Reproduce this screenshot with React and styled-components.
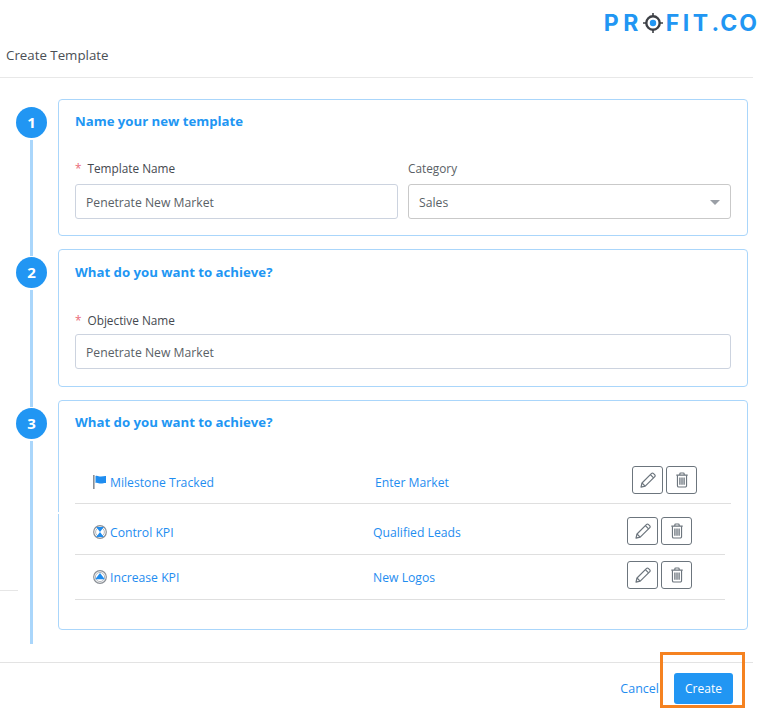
import React from "react";
import styled, { createGlobalStyle } from "styled-components";

const Global = createGlobalStyle`
  html, body { margin: 0; padding: 0; background: #fff; }
  body { font-family: "Open Sans", "Noto Sans", sans-serif; color: #4a4f55; }
  * { box-sizing: border-box; }
`;

const Page = styled.div`
  width: 768px;
  height: 708px;
  overflow: hidden;
  position: relative;
  display: flex;
  flex-direction: column;
`;
const LogoBar = styled.div`
  height: 45px;
  padding: 12px 9px 0 0;
  display: flex;
  justify-content: flex-end;
`;
const Logo = styled.div`
  display: flex;
  align-items: center;
  height: 21px;
  font-family: Inter, "Liberation Sans", sans-serif;
  font-weight: 700;
  font-size: 23px;
  color: #2196f3;
`;
const LogoWord = styled.span`
  letter-spacing: ${(p) => p.$spacing}px;
`;
const LogoMark = styled.svg`
  width: 20px;
  height: 20px;
  margin: 0 3px 0 0;
`;
const TitleBar = styled.div`
  height: 33px;
  padding: 1px 0 0 6px;
  border-bottom: 1px solid #e8e8e8;
  font-size: 13.3px;
  line-height: 18px;
  color: #4a4f55;
  margin-right: 15px;
`;
const Steps = styled.div`
  height: 584px;
  padding-top: 21px;
  display: flex;
  flex-direction: column;
  gap: 13px;
`;
const Step = styled.section`
  display: flex;
  height: ${(p) => p.$height}px;
`;
const Rail = styled.div`
  width: 58px;
  flex: none;
  padding: 8px 0 0 16px;
  display: flex;
  flex-direction: column;
  margin-bottom: ${(p) => p.$tail}px;
`;
const Bullet = styled.div`
  width: 31px;
  height: 31px;
  padding-bottom: 1px;
  border-radius: 50%;
  background: #2196f3;
  color: #fff;
  font-weight: 700;
  font-size: 15px;
  display: flex;
  align-items: center;
  justify-content: center;
  flex: none;
`;
const RailLine = styled.div`
  width: 3px;
  margin: 2px 0 0 14px;
  background: #aad6fb;
  flex: 1;
`;
const Card = styled.div`
  position: relative;
  width: 690px;
  border: 1px solid #aad6fb;
  border-radius: 4px;
  padding: ${(p) => p.$pt}px 16px 0;
  height: ${(p) => p.$height}px;
`;
const CardTitle = styled.h2`
  margin: 0;
  font-size: 13.2px;
  line-height: 18px;
  font-weight: 700;
  color: #2196f3;
`;
const FieldRow = styled.div`
  margin-top: ${(p) => p.$mt}px;
  display: grid;
  grid-template-columns: 323px 323px;
  gap: 10px;
`;
const Field = styled.div`
  display: flex;
  flex-direction: column;
  grid-column: ${(p) => (p.$wide ? "1 / -1" : "auto")};
`;
const Label = styled.label`
  font-size: 11.8px;
  line-height: 16px;
  font-weight: ${(p) => (p.$plain ? 400 : 500)};
  color: ${(p) => (p.$plain ? "#5a5f66" : "#45494f")};
  margin-bottom: ${(p) => p.$mb}px;
  display: flex;
  gap: 6px;
`;
const Star = styled.span`
  color: #ea6a78;
`;
const Input = styled.div`
  height: 35px;
  padding: 1px 10px 0;
  border: 1px solid ${(p) => (p.$select ? "#c9c9c9" : "#ccd3df")};
  border-radius: 3px;
  display: flex;
  align-items: center;
  justify-content: space-between;
  font-size: 12.2px;
  color: #5a5f66;
`;
const Caret = styled.span`
  width: 0;
  height: 0;
  border-left: 5px solid transparent;
  border-right: 5px solid transparent;
  border-top: 5px solid #9a9fa6;
`;
const Rows = styled.div`
  margin-top: 25px;
  display: flex;
  flex-direction: column;
`;
const Row = styled.div`
  display: flex;
  align-items: center;
  height: ${(p) => p.$h}px;
  width: ${(p) => p.$w}px;
  padding: ${(p) => p.$pad};
  border-bottom: 1px solid #dfdfdf;
  font-size: 12.2px;
  color: #1f8df0;
`;
const Kind = styled.div`
  width: ${(p) => p.$w}px;
  flex: none;
  display: flex;
  align-items: center;
  gap: 3px;
  padding-top: ${(p) => p.$shift}px;
`;
const Value = styled.div`
  flex: 1;
  padding-top: ${(p) => p.$shift}px;
`;
const Actions = styled.div`
  display: flex;
  gap: 3px;
  margin-right: ${(p) => p.$mr}px;
`;
const IconBtn = styled.button`
  width: 31px;
  height: 28px;
  padding: 0;
  background: #fff;
  border: 1px solid #6c757d;
  border-radius: 3px;
  display: flex;
  align-items: center;
  justify-content: center;
`;
const KindIcon = styled.svg`
  width: 14px;
  height: 14px;
  flex: none;
`;
const BorderNotch = styled.span`
  position: absolute;
  left: -1px;
  top: 111px;
  width: 1px;
  height: 2px;
  background: #fff;
`;
const Footer = styled.footer`
  border-top: 1px solid #e3e3e3;
  margin-right: 15px;
  height: 46px;
  padding: 10px 20px 0 0;
  display: flex;
  justify-content: flex-end;
  align-items: flex-start;
  gap: 15px;
`;
const Cancel = styled.a`
  font-size: 12.5px;
  line-height: 31px;
  color: #1f8df0;
`;
const Primary = styled.button`
  width: 59px;
  height: 31px;
  background: #2196f3;
  border: 0;
  border-radius: 3px;
  color: #fff;
  font: 500 12px "Open Sans", "Noto Sans", sans-serif;
`;
const Highlight = styled.div`
  position: absolute;
  left: 660px;
  top: 652px;
  width: 85px;
  height: 56px;
  border: 3px solid #f58220;
  pointer-events: none;
`;
const StrayRule = styled.div`
  position: absolute;
  left: 0;
  top: 590px;
  width: 18px;
  height: 1px;
  background: #e6e6e6;
`;

const Pencil = () => (
  <svg width="18" height="18" viewBox="0 0 18 18" fill="none" stroke="#6c757d" strokeWidth="1.2" strokeLinejoin="round">
    <path d="M2 16.200l1-4.200L12.600 2.400a1.200 1.200 0 0 1 1.700 0l1.500 1.500a1.200 1.200 0 0 1 0 1.700L6.200 15.200z" fill="#fff" />
    <path d="M3 12l3.200 3.200M11.400 3.600l3.200 3.200" />
  </svg>
);
const Trash = () => (
  <svg width="14" height="16" viewBox="0 0 16 18" fill="none" stroke="#6c757d" strokeWidth="1.300">
    <path d="M1.500 3.500h13M5.500 3.500V2a1 1 0 0 1 1-1h3a1 1 0 0 1 1 1v1.500" />
    <path d="M2.800 3.500v12a1.500 1.500 0 0 0 1.500 1.500h7.400a1.500 1.500 0 0 0 1.500-1.500v-12" />
    <path d="M5.600 6v8.500M8 6v8.500M10.400 6v8.500" strokeWidth="1.500" />
  </svg>
);
const Flag = () => (
  <KindIcon viewBox="0 0 14 14">
    <rect x="0" y="0" width="1.600" height="14" fill="#8a8f96" />
    <path d="M2.500 1c2-1 3.500.8 5.500.6 2-.2 3.500-.8 5-.6v7c-1.500-.2-3 .5-5 .6-2 .2-3.500-1.400-5.500-.6z" fill="#1f8df0" />
  </KindIcon>
);
const ControlGlyph = () => (
  <KindIcon viewBox="0 0 14 14">
    <circle cx="7" cy="7" r="6.300" fill="none" stroke="#8a8f96" strokeWidth="1.200" />
    <circle cx="7" cy="7" r="4.400" fill="none" stroke="#b5b8bc" strokeWidth="1" />
    <path d="M3.200 2h7.600L7 7l3.800 5H3.200L7 7z" fill="#1f8df0" />
  </KindIcon>
);
const IncreaseGlyph = () => (
  <KindIcon viewBox="0 0 14 14">
    <circle cx="7" cy="7" r="6.300" fill="none" stroke="#8a8f96" strokeWidth="1.200" />
    <circle cx="7" cy="7" r="4.600" fill="none" stroke="#b5b8bc" strokeWidth="1" />
    <path d="M7 3l4.800 6.200H2.200z" fill="#1f8df0" />
  </KindIcon>
);

const rows = [
  { icon: <Flag />, kind: "Milestone Tracked", value: "Enter Market", h: 48, w: 656, kw: 282, mr: 34, pad: "0 0 0 18px", shift: 5 },
  { icon: <ControlGlyph />, kind: "Control KPI", value: "Qualified Leads", h: 51, w: 650, kw: 280, mr: 33, pad: "4px 0 0 18px", shift: 2 },
  { icon: <IncreaseGlyph />, kind: "Increase KPI", value: "New Logos", h: 45, w: 650, kw: 280, mr: 33, pad: "0 0 4px 18px", shift: 4 },
];

export default function App() {
  return (
    <Page>
      <Global />
      <LogoBar>
        <Logo>
          <LogoWord $spacing={4.5}>PR</LogoWord>
          <LogoMark viewBox="0 0 20 20">
            <circle cx="10" cy="10" r="6.700" fill="none" stroke="#3d4046" strokeWidth="2.400" />
            <path d="M10 0v4M10 16v4M0 10h4M16 10h4" stroke="#3d4046" strokeWidth="1.600" />
            <circle cx="10" cy="10" r="3.200" fill="#2196f3" />
          </LogoMark>
          <LogoWord $spacing={3.5}>FIT</LogoWord>
          <LogoWord $spacing={2}>.CO</LogoWord>
        </Logo>
      </LogoBar>
      <TitleBar>Create Template</TitleBar>
      <Steps>
        <Step $height={137}>
          <Rail $tail={-20}>
            <Bullet>1</Bullet>
            <RailLine />
          </Rail>
          <Card $height={137} $pt={12}>
            <CardTitle>Name your new template</CardTitle>
            <FieldRow $mt={30}>
              <Field>
                <Label $mb={8}>
                  <Star>*</Star>Template Name
                </Label>
                <Input>Penetrate New Market</Input>
              </Field>
              <Field>
                <Label $mb={8} $plain>Category</Label>
                <Input $select>
                  Sales
                  <Caret />
                </Input>
              </Field>
            </FieldRow>
          </Card>
        </Step>
        <Step $height={138}>
          <Rail $tail={-20}>
            <Bullet>2</Bullet>
            <RailLine />
          </Rail>
          <Card $height={138} $pt={13}>
            <CardTitle>What do you want to achieve?</CardTitle>
            <FieldRow $mt={31}>
              <Field $wide>
                <Label $mb={6}>
                  <Star>*</Star>Objective Name
                </Label>
                <Input>Penetrate New Market</Input>
              </Field>
            </FieldRow>
          </Card>
        </Step>
        <Step $height={230}>
          <Rail $tail={-14}>
            <Bullet>3</Bullet>
            <RailLine />
          </Rail>
          <Card $height={230} $pt={12}>
            <CardTitle>What do you want to achieve?</CardTitle>
            <Rows>
              {rows.map((r) => (
                <Row key={r.kind} $h={r.h} $w={r.w} $pad={r.pad}>
                  <Kind $w={r.kw} $shift={r.shift}>
                    {r.icon}
                    {r.kind}
                  </Kind>
                  <Value $shift={r.shift}>{r.value}</Value>
                  <Actions $mr={r.mr}>
                    <IconBtn aria-label="Edit"><Pencil /></IconBtn>
                    <IconBtn aria-label="Delete"><Trash /></IconBtn>
                  </Actions>
                </Row>
              ))}
            </Rows>
            <BorderNotch />
          </Card>
        </Step>
      </Steps>
      <Footer>
        <Cancel>Cancel</Cancel>
        <Primary>Create</Primary>
      </Footer>
      <StrayRule />
      <Highlight />
    </Page>
  );
}
